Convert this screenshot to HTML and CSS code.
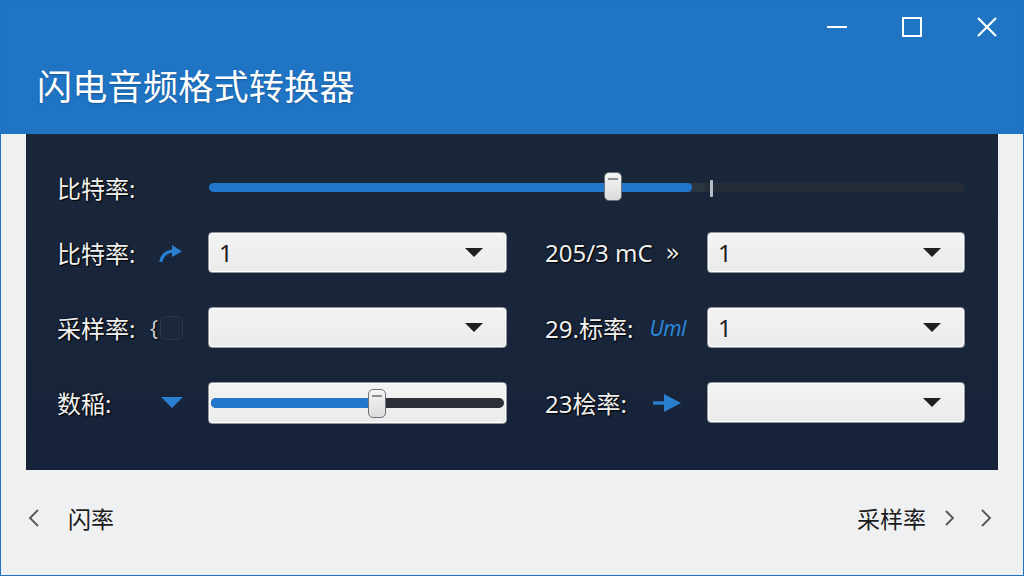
FILE: index.html
```html
<!DOCTYPE html>
<html lang="zh-CN">
<head>
<meta charset="utf-8">
<title>闪电音频格式转换器</title>
<link rel="stylesheet" href="styles.css">
</head>
<body>
<div class="window">
  <header class="titlebar">
    <div class="controls">
      <span class="ctl">
        <svg width="22" height="22" viewBox="0 0 22 22"><line x1="1" y1="11" x2="21" y2="11" stroke="#fff" stroke-width="2"/></svg>
      </span>
      <span class="ctl">
        <svg width="22" height="22" viewBox="0 0 22 22"><rect x="2" y="2" width="18" height="18" fill="none" stroke="#fff" stroke-width="2"/></svg>
      </span>
      <span class="ctl">
        <svg width="22" height="22" viewBox="0 0 22 22"><path d="M2 2 L20 20 M20 2 L2 20" stroke="#fff" stroke-width="2.2" fill="none"/></svg>
      </span>
    </div>
    <h1 class="title">闪电音频格式转换器</h1>
  </header>

  <main class="panel">
    <div class="label">比特率:</div>
    <div class="slider wide">
      <div class="track">
        <div class="fill" style="width:483px"></div>
        <div class="fill-end"></div>
      </div>
      <div class="tick"></div>
      <div class="thumb big"></div>
    </div>

    <div class="label">比特率:
      <span class="icon">
        <svg width="24" height="18" viewBox="0 0 24 18"><path d="M2 17 Q4 8 14 7" stroke="#2a7fd0" stroke-width="3.2" fill="none" stroke-linecap="round"/><polygon points="13,1 23,7.5 13,13" fill="#2a7fd0"/></svg>
      </span>
    </div>
    <div class="combo"><span class="val">1</span><span class="caret"></span></div>
    <div class="label right">205/3 mC<span class="icon guil">»</span></div>
    <div class="combo"><span class="val">1</span><span class="caret"></span></div>

    <div class="label">采样率:
      <span class="icon brace"><span class="br">{</span><span class="box"></span></span>
    </div>
    <div class="combo"><span class="val"></span><span class="caret"></span></div>
    <div class="label right">29.标率:<span class="icon uml">Uml</span></div>
    <div class="combo"><span class="val">1</span><span class="caret"></span></div>

    <div class="label">数稲:
      <span class="icon">
        <svg width="22" height="12" viewBox="0 0 22 12"><polygon points="0,0 22,0 11,11" fill="#2a7fd0"/></svg>
      </span>
    </div>
    <div class="combo sliderbox">
      <div class="slider small">
        <div class="track dark">
          <div class="fill" style="width:160px"></div>
        </div>
        <div class="thumb little"></div>
      </div>
    </div>
    <div class="label right">23桧率:
      <span class="icon arrow">
        <svg width="30" height="18" viewBox="0 0 30 18"><line x1="1" y1="9" x2="16" y2="9" stroke="#2a7fd0" stroke-width="3.4"/><polygon points="12,0 29,9 12,18" fill="#2a7fd0"/></svg>
      </span>
    </div>
    <div class="combo"><span class="val"></span><span class="caret"></span></div>
  </main>

  <footer class="nav">
    <div class="nav-left">
      <svg class="chev" width="12" height="20" viewBox="0 0 12 20"><path d="M10 2 L2 10 L10 18" stroke="#555" stroke-width="1.8" fill="none"/></svg>
      <span class="nav-text">闪率</span>
    </div>
    <div class="nav-right">
      <span class="nav-text">采样率</span>
      <svg class="chev c1" width="12" height="20" viewBox="0 0 12 20"><path d="M2 3 L9 10 L2 17" stroke="#555" stroke-width="1.8" fill="none"/></svg>
      <svg class="chev c2" width="12" height="20" viewBox="0 0 12 20"><path d="M2 2 L10 10 L2 18" stroke="#555" stroke-width="1.8" fill="none"/></svg>
    </div>
  </footer>
</div>
</body>
</html>
```

FILE: styles.css
```css
* { box-sizing: border-box; }
html, body { margin: 0; padding: 0; }
body {
  width: 1024px;
  height: 576px;
  overflow: hidden;
  font-family: "Noto Sans", "Noto Sans CJK SC", sans-serif;
}
.window {
  width: 1024px;
  height: 576px;
  border: 1px solid #1f73c3;
  background: #eff0f2;
  display: flex;
  flex-direction: column;
}
.titlebar {
  height: 133px;
  background: #1f74c4;
  display: flex;
  flex-direction: column;
}
.controls {
  display: flex;
  justify-content: flex-end;
  padding: 15px 25px 0 0;
  gap: 53px;
}
.ctl { display: flex; width: 22px; height: 22px; }
.title {
  margin: 0;
  padding: 25px 0 0 36px;
  font-family: "Noto Sans CJK SC", sans-serif;
  font-weight: 400;
  font-size: 35px;
  line-height: 44px;
  color: #fff;
  letter-spacing: 0.3px;
  text-shadow: 0 1px 2px rgba(0,0,0,0.25);
}
.panel {
  margin: 0 25px;
  height: 336px;
  background: #18253a;
  background: linear-gradient(180deg, #1a273a 0%, #17233a 100%);
  padding: 33px 33px 0 31px;
  display: grid;
  grid-template-columns: 151px 299px 200px 258px;
  grid-template-rows: 31px 41px 41px 42px;
  row-gap: 34px;
}
.label {
  display: flex;
  align-items: center;
  font-family: "Noto Sans", "Noto Sans CJK SC", sans-serif;
  font-size: 24px;
  color: #f1f1f1;
  text-shadow: 1px 1px 1px #000, 0 0 2px #000;
  padding-right: 25px;
  height: 41px;
  white-space: nowrap;
}
.label .icon {
  margin-left: auto;
  display: flex;
  align-items: center;
}
.label.right {
  padding-left: 38px;
  padding-right: 21px;
}
.guil { font-family: "DejaVu Sans", sans-serif; font-size: 24px; color: #e8e8e8; margin-right: 6px; }
.uml { color: #2a86d8; font-style: italic; font-family: "Noto Sans", sans-serif; font-size: 21px; text-shadow: none; letter-spacing: -0.5px; }
.arrow { margin-right: 4px; }
.brace { gap: 2px; }
.br { color: #c9ccd0; font-family: "Noto Sans", sans-serif; font-size: 22px; margin-top: -2px; }
.box {
  width: 23px;
  height: 24px;
  border: 1.5px solid #2c3748;
  border-radius: 5px;
  background: #1c293c;
}
.slider {
  position: relative;
  display: flex;
  align-items: center;
}
.slider.wide {
  grid-column: 2 / 5;
  height: 40px;
  margin-left: 1px;
}
.track {
  position: relative;
  width: 100%;
  height: 9px;
  border-radius: 5px;
  background: #242c37;
}
.fill {
  position: absolute;
  left: 0; top: 0; bottom: 0;
  background: #2277cc;
  border-radius: 5px;
  z-index: 1;
}
.fill-end {
  position: absolute;
  left: 470px; top: 0; bottom: 0;
  width: 27px;
  background: #2c3542;
  border-radius: 5px;
}
.tick {
  position: absolute;
  left: 501px;
  top: 13px;
  width: 3px;
  height: 17px;
  background: #b8bcc2;
  border-radius: 1px;
}
.thumb {
  position: absolute;
  z-index: 2;
  background: linear-gradient(180deg, #f4f4f4, #dcdcdc);
  border: 1px solid #6d737a;
  border-radius: 5px;
}
.thumb::before {
  content: "";
  position: absolute;
  left: 3px; right: 3px; top: 5px;
  height: 2px;
  background: #8a8f95;
}
.thumb.big { left: 395px; top: 5px; width: 18px; height: 29px; }
.combo {
  height: 41px;
  background: linear-gradient(180deg, #f3f3f3 0%, #ebebeb 100%);
  border: 1px solid #8f959c;
  border-radius: 4px;
  box-shadow: inset 0 0 0 1px #fff;
  display: flex;
  align-items: center;
  padding: 0 23px 0 10px;
}
.val {
  font-family: "Noto Sans", sans-serif;
  font-size: 24px;
  color: #1e1e1e;
  flex: 1;
}
.caret {
  width: 0; height: 0;
  border-left: 9px solid transparent;
  border-right: 9px solid transparent;
  border-top: 9px solid #1f1f1f;
}
.combo.sliderbox { height: 42px; padding: 0 2px; }
.slider.small { width: 100%; height: 40px; }
.track.dark { background: #2b2f36; height: 10px; }
.track.dark .fill { width: 160px; }
.thumb.little { left: 157px; top: 6px; width: 18px; height: 29px; }
.nav {
  flex: 1;
  display: flex;
  justify-content: space-between;
  align-items: center;
  padding: 0 31px 10px 27px;
}
.nav-left, .nav-right { display: flex; align-items: center; }
.nav-text {
  font-family: "Noto Sans CJK SC", sans-serif;
  font-size: 23px;
  color: #1c1c1c;
}
.nav-left .nav-text { margin-left: 28px; }
.nav-right .nav-text { margin-right: 2px; }
.c1 { margin-left: 16px; }
.c2 { margin-left: 24px; }
```
